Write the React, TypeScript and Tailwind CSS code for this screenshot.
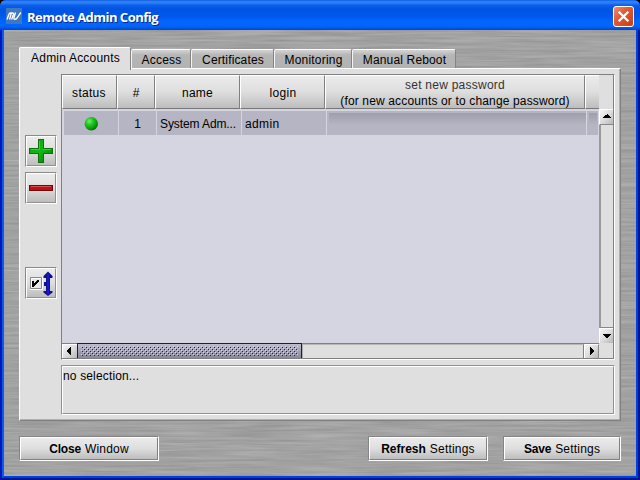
import React from "react";

const GREY_FACE = "bg-gradient-to-b from-[#ebebeb] via-[#dedede] to-[#bdbdbd]";

function BrushedMetal() {
  return (
    <svg className="[grid-area:1/1] block bg-[#a2a2a2]" width="632" height="446">
      <filter id="brushed" x="-10" y="-10" width="660" height="480" filterUnits="userSpaceOnUse" colorInterpolationFilters="sRGB">
        <feTurbulence type="fractalNoise" baseFrequency="0.014 0.4" numOctaves="3" seed="4" />
        <feColorMatrix values="0.15 0 0 0 0.56  0.15 0 0 0 0.56  0.15 0 0 0 0.56  0 0 0 0 1" />
      </filter>
      <rect width="632" height="446" filter="url(#brushed)" />
    </svg>
  );
}

function TitleBar() {
  return (
    <div className="h-[30px] shrink-0 flex items-center pl-[6px] pr-[6px] bg-[linear-gradient(180deg,#0a50d8_0px,#2a80f8_1px,#2c80f4_3px,#0c60e8_5px,#0054e3_9px,#0058ec_16px,#0066ff_22px,#0066fc_26px,#0058e8_28px,#0044c8_30px)]">
      <svg width="16" height="16" viewBox="0 0 16 16" className="shrink-0 mt-[2px]">
        <rect width="16" height="16" fill="#3f77c2" />
        <path d="M1 11.500 2.800 6.500Q3.300 5 4.500 5H6.500Q7.800 5 7.400 6.400L5.600 11.500M5.200 5.500 3.600 11.500M9.500 4.500 8 9.500Q7.500 11.500 9 11.300T11 10L14.800 4.500" fill="none" stroke="#fff" strokeWidth="1.4" />
      </svg>
      <span className="ml-[5px] mt-[3px] whitespace-nowrap font-['Open_Sans','Noto_Sans',sans-serif] text-[13px] leading-4 font-bold text-white tracking-[-0.52px] [text-shadow:1px_1px_0_#0a2a8c]">
        Remote Admin Config
      </span>
      <svg width="21" height="21" viewBox="0 0 21 21" className="ml-auto mt-[2px] shrink-0">
        <defs>
          <linearGradient id="close" x1="0" y1="0" x2="1" y2="1">
            <stop offset="0" stopColor="#f09078" />
            <stop offset=".4" stopColor="#e35a34" />
            <stop offset="1" stopColor="#c83c10" />
          </linearGradient>
        </defs>
        <rect x=".5" y=".5" width="20" height="20" rx="2.5" fill="url(#close)" stroke="#fff" />
        <path d="M5.7 5.7 15.3 15.3M15.3 5.7 5.7 15.3" stroke="#fff" strokeWidth="2.2" />
      </svg>
    </div>
  );
}

function Tab({ label, box, text }: { label: string; box: string; text: string }) {
  return (
    <div className={`h-[19px] mt-[2px] rounded-t-[2px] border-t border-l border-r border-t-white border-l-[#f4f4f4] border-r-[#848484] bg-gradient-to-b from-[#cfcfcf] from-[1px] via-[#b6b6b6] via-[5px] to-[#b2b2b2] pt-[3px] pl-px whitespace-nowrap text-center ${box}`}>
      <span className={text}>{label}</span>
    </div>
  );
}

function PushButton({ bold, rest, box, boldText, text }: { bold: string; rest: string; box: string; boldText: string; text: string }) {
  return (
    <div className={`h-[25px] border-t border-l border-[#858585] border-r border-b border-r-white border-b-white ${box}`}>
      <div className={`h-full border border-t-white border-l-white border-r-[#808080] border-b-[#808080] whitespace-nowrap flex items-center justify-center pt-px ${GREY_FACE}`}>
        <b className={boldText}>{bold}</b>
        <span className={`ml-[4px] ${text}`}>{rest}</span>
      </div>
    </div>
  );
}

function ToolButton({ children, box }: { children: React.ReactNode; box: string }) {
  return (
    <div className={`w-[32px] h-[32px] border border-t-[#8a8a8a] border-l-[#8a8a8a] border-r-white border-b-white ${box}`}>
      <div className={`h-full border border-t-white border-l-white border-r-[#909090] border-b-[#909090] ${GREY_FACE}`}>{children}</div>
    </div>
  );
}

function HeaderCell({ box, children }: { box: string; children?: React.ReactNode }) {
  return (
    <div className={`h-[34px] shrink-0 border-t border-l border-t-white border-l-white border-b border-b-[#777] whitespace-nowrap flex flex-col items-center justify-center pt-[2px] ${GREY_FACE} ${box}`}>
      {children}
    </div>
  );
}

function ArrowButton({ d, box }: { d: string; box: string }) {
  return (
    <div className={`shrink-0 bg-gradient-to-br from-[#f4f4f4] via-[#dcdcdc] to-[#b8b8b8] border-t border-l border-t-white border-l-white ${box}`}>
      <svg width="14" height="14" viewBox="0 0 14 14" shapeRendering="crispEdges">
        <path d={d} fill="#000" />
      </svg>
    </div>
  );
}

function AccountsTable() {
  return (
    <div className="w-[554px] h-[286px] border border-t-[#808080] border-l-[#808080] border-r-white border-b-white flex flex-col">
      <div className="flex h-[269px] shrink-0">
        <div className="w-[537px] bg-[#d5d5e1] flex flex-col">
          <div className="flex">
            <HeaderCell box="w-[55px] border-r border-r-[#808080]"><span className="tracking-[0.3px] pr-px">status</span></HeaderCell>
            <HeaderCell box="w-[38px] border-r border-r-[#808080]">#</HeaderCell>
            <HeaderCell box="w-[85px] border-r border-r-[#808080]"><span className="tracking-[0.2px]">name</span></HeaderCell>
            <HeaderCell box="w-[85px] border-r border-r-[#808080]"><span className="tracking-[0.3px] pl-px">login</span></HeaderCell>
            <HeaderCell box="w-[260px] border-r border-r-[#808080]">
              <span className="tracking-[0.25px] leading-4 text-[#333]">set new password</span>
              <span className="tracking-[0.15px] leading-4">(for new accounts or to change password)</span>
            </HeaderCell>
            <HeaderCell box="w-[14px]" />
          </div>
          <div className="mt-[2px] ml-[2px] h-[24px] flex gap-px whitespace-nowrap leading-[27px] overflow-hidden">
            <div className="w-[54px] shrink-0 bg-[#b5b5c3] flex justify-center">
              <svg width="14" height="14" viewBox="0 0 14 14" className="mt-[6px]">
                <defs>
                  <radialGradient id="led" cx=".36" cy=".32" r=".8">
                    <stop offset="0" stopColor="#70ef70" />
                    <stop offset=".35" stopColor="#1fc91f" />
                    <stop offset=".7" stopColor="#0a9a0a" />
                    <stop offset="1" stopColor="#065006" />
                  </radialGradient>
                </defs>
                <circle cx="7.300" cy="6.700" r="6.700" fill="url(#led)" />
              </svg>
            </div>
            <div className="w-[37px] shrink-0 bg-[#b5b5c3] text-center">1</div>
            <div className="w-[84px] shrink-0 bg-[#b5b5c3] pl-[3px] tracking-[-0.1px]">System Adm...</div>
            <div className="w-[84px] shrink-0 bg-[#b5b5c3] pl-[3px] tracking-[0.35px]">admin</div>
            <div className="w-[259px] shrink-0 bg-[#b5b5c3] pl-[2px] pt-[2px]">
              <div className="h-[12px] bg-gradient-to-b from-[#9f9fab] to-[#b5b5c3]" />
            </div>
            <div className="w-[11px] shrink-0 bg-[#b5b5c3] pl-[2px] pr-px pt-[2px]">
              <div className="h-[12px] bg-gradient-to-b from-[#9f9fab] to-[#b5b5c3]" />
            </div>
          </div>
        </div>
        <div className="w-[15px] flex flex-col border-r border-r-[#808080] bg-[#dfdfdf]">
          <div className="h-[34px] shrink-0" />
          <ArrowButton d="M7 4h1v1h1v1h1v1h1v1H3V7h1V6h1V5h2Z" box="h-[16px] border-b border-b-[#888]" />
          <div className="grow border-l-2 border-l-[#999] border-b border-b-[#888]" />
          <ArrowButton d="M3 5h8v1h-1v1H9v1H8v1H6V8H5V7H4V6H3Z" box="h-[16px] border-b border-b-[#888]" />
        </div>
      </div>
      <div className="h-[15px] flex border-b border-b-[#808080] bg-[#dfdfdf] -mt-px grow">
        <div className="w-[537px] flex border-t border-t-[#808080]">
          <ArrowButton d="M8 2v8H7V9H6V8H5V7H4V5h1V4h1V3h1V2Z" box="w-[15px]" />
          <div className="w-[225px] border-l border-r border-[#202028] bg-gradient-to-b from-[#bcbccd] to-[#88889c] shadow-[0_-1px_0_#202028]">
            <svg width="223" height="14" shapeRendering="crispEdges">
              <defs>
                <pattern id="grip" width="4" height="4" patternUnits="userSpaceOnUse" x="3" y="2">
                  <path d="M0 0h1v1H0zM2 2h1v1H2z" fill="#d5d5e6" />
                  <path d="M1 1h1v1H1zM3 3h1v1H3z" fill="#26263a" />
                </pattern>
              </defs>
              <rect x="3" y="2" width="217" height="10" fill="url(#grip)" />
            </svg>
          </div>
          <div className="grow border-t border-t-[#b8b8b8] border-l border-l-[#aaa] border-r border-r-[#808080]" />
          <ArrowButton d="M5 2v8h1V9h1V8h1V7h1V5H8V4H7V3H6V2Z" box="w-[15px] border-r border-r-[#888]" />
        </div>
        <div className="w-[15px] border-r border-r-[#808080]" />
      </div>
    </div>
  );
}

export default function App() {
  return (
    <div className="w-[640px] h-[480px] overflow-hidden bg-black">
      <div className="w-full h-full rounded-t-[6px] overflow-hidden bg-[#0a50e4] flex flex-col font-['Liberation_Sans',Arial,sans-serif] text-[12px] leading-[15px] text-black">
        <TitleBar />
        <div className="h-[450px] border-x-2 border-b-2 border-l-[#0018c0] border-r-[#001590] border-b-[#001590]">
          <div className="h-[448px] border-x-2 border-b-2 border-l-[#1058e8] border-r-[#0040e0] border-b-[#0040e0] grid">
            <BrushedMetal />
            <div className="[grid-area:1/1] relative flex flex-col pt-[17px] pl-[15px]">
              <div className="flex h-[21px] w-[602px]">
                <div className="w-[112px] h-[23px] shrink-0 z-10 rounded-t-[2px] border-t border-l border-r border-t-white border-l-white border-r-[#858585] bg-[#dfdfdf] text-center pt-[3px] pl-px whitespace-nowrap">
                  <span className="tracking-[0.2px]">Admin Accounts</span>
                </div>
                <Tab label="Access" box="w-[60px]" text="tracking-[0.25px]" />
                <Tab label="Certificates" box="w-[83px]" text="tracking-[0.15px]" />
                <Tab label="Monitoring" box="w-[78px]" text="tracking-[0.2px]" />
                <Tab label="Manual Reboot" box="w-[104px]" text="tracking-[0.15px]" />
              </div>
              <div className="w-[602px] h-[353px] shrink-0 bg-[#dfdfdf] border-t border-l border-t-white border-l-white border-r border-b border-r-[#808080] border-b-[#808080] shadow-[inset_-1px_-1px_0_#b0b0b0] flex">
                <div className="w-[41px] pl-[5px] pt-[66px] flex flex-col shrink-0">
                  <ToolButton box="">
                    <svg width="28" height="28" viewBox="0 0 28 28">
                      <defs>
                        <linearGradient id="plus" x1="0" y1="0" x2="1" y2="1">
                          <stop offset="0" stopColor="#109a10" />
                          <stop offset=".5" stopColor="#12ba12" />
                          <stop offset="1" stopColor="#087008" />
                        </linearGradient>
                      </defs>
                      <path d="M11 2h6v9h9v6h-9v9h-6v-9H2v-6h9Z" fill="#0a720a" />
                      <path d="M12 3h4v9h9v4h-9v9h-4v-9H3v-4h9Z" fill="url(#plus)" />
                      <path d="M12.5 4v8.5H4M16 12.5h8" fill="none" stroke="#38d038" />
                    </svg>
                  </ToolButton>
                  <ToolButton box="mt-[5px]">
                    <svg width="28" height="28" viewBox="0 0 28 28">
                      <path d="M2 11h24v6H2Z" fill="#700808" />
                      <path d="M3 12h22v4H3Z" fill="#b81418" />
                      <path d="M4 12.5h20" stroke="#dc5050" />
                    </svg>
                  </ToolButton>
                  <ToolButton box="mt-[63px]">
                    <svg width="28" height="28" viewBox="0 0 28 28">
                      <path d="M3.500 8.500h11v11h-11Z" fill="#e8e8e8" stroke="#888" />
                      <path d="M4.500 18.500V9.500H14M15.500 8v12.500H3" fill="none" stroke="#fff" />
                      <path d="M5 12h2v2h1v-1h1v-1h1v-1h2v2h-1v1h-1v1H9v1H8v1H7v1H5Z" fill="#000" />
                      <path d="M21 2.500 25.500 7V9H23v13h2.500v1.500L21 27 16.500 23.500V22H19v-5h-2v-4h2V9h-2.500V7Z" fill="#10108c" />
                      <path d="M21 4.500v21" stroke="#1616d0" strokeWidth="2" />
                    </svg>
                  </ToolButton>
                </div>
                <div className="pt-[5px] flex flex-col">
                  <AccountsTable />
                  <div className="mt-[5px] w-[554px] h-[50px] border border-[#929292] border-r-white border-b-white">
                    <div className="h-full border border-t-white border-l-white border-r-[#929292] border-b-[#929292] pt-[2px]">
                      <span className="tracking-[0.15px]">no selection...</span>
                    </div>
                  </div>
                </div>
              </div>
              <div className="mt-[15px] w-[602px] flex">
                <PushButton bold="Close" rest="Window" box="w-[140px]" boldText="tracking-[-0.2px]" text="tracking-[0.2px]" />
                <PushButton bold="Refresh" rest="Settings" box="w-[120px] ml-[209px]" boldText="" text="tracking-[0.2px]" />
                <PushButton bold="Save" rest="Settings" box="w-[118px] ml-[15px]" boldText="tracking-[-0.2px]" text="tracking-[0.2px]" />
              </div>
            </div>
          </div>
        </div>
      </div>
    </div>
  );
}
